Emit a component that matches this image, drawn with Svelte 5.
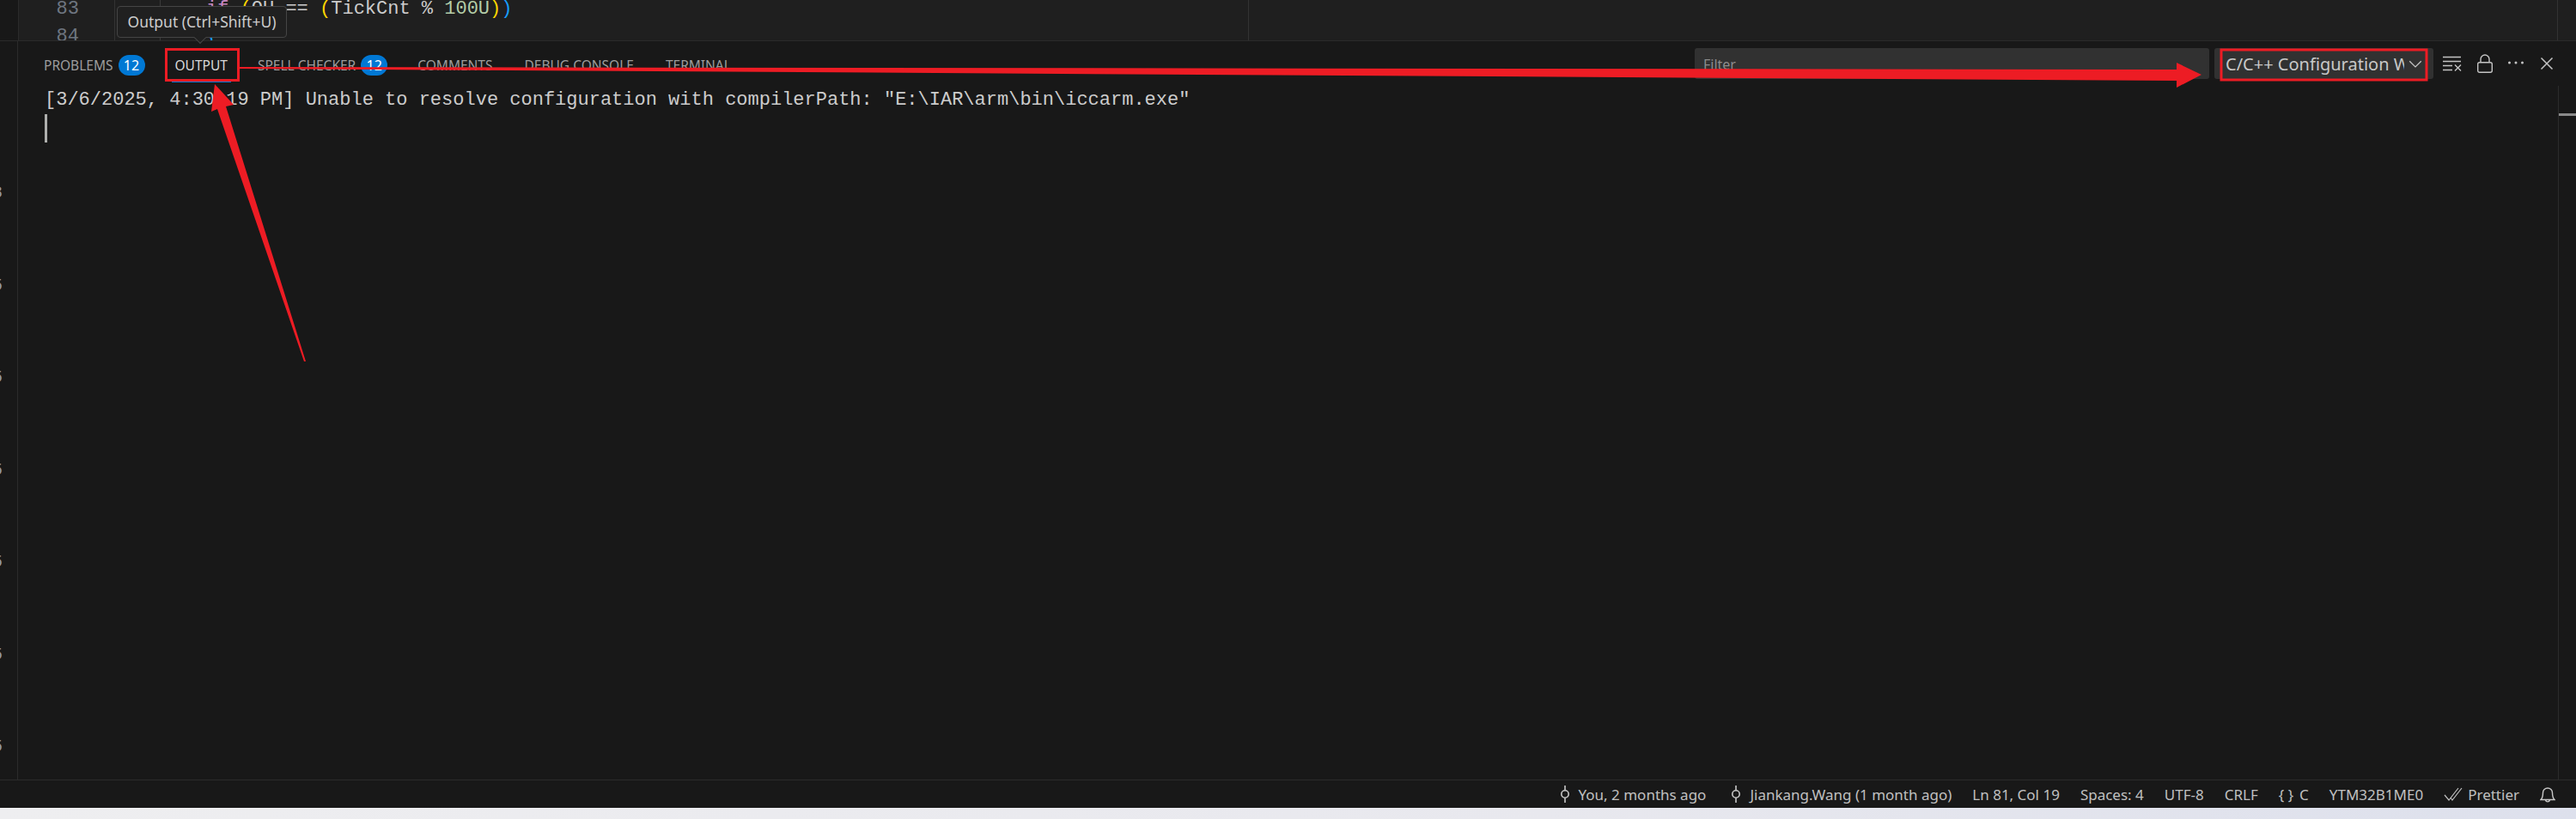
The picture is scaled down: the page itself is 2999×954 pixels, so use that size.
<script>
  // panel tabs, the badge is optional
  const tabs = [
    { label: 'PROBLEMS', badge: 12 },
    { label: 'OUTPUT', active: true },
    { label: 'SPELL CHECKER', badge: 12 },
    { label: 'COMMENTS' },
    { label: 'DEBUG CONSOLE' },
    { label: 'TERMINAL' }
  ];

  // clipped digits of the window behind, every 107px down the rail
  const railMarks = ['8', '5', '5', '5', '5', '5', '5'];

  const logLine =
    '[3/6/2025, 4:30:19 PM] Unable to resolve configuration with compilerPath: "E:\\IAR\\arm\\bin\\iccarm.exe"';
</script>

<div class="window">
  <section class="editor">
    <div class="rail"></div>
    <div class="gutter">
      <div class="num">83</div>
      <div class="num">84</div>
    </div>
    <div class="code">
      <div class="line"><span class="kw">if</span> <span class="br-y">(</span>OU == <span class="br-y">(</span>TickCnt % <span class="lit">100U</span><span class="br-y">)</span><span class="br-b">)</span></div>
      <div class="line"><span class="br-b">&#123;</span></div>
    </div>
    <div class="side"></div>
    <div class="edge"></div>
  </section>

  <section class="panel">
    <div class="rail marks">
      {#each railMarks as mark}
        <span class="mark">{mark}</span>
      {/each}
    </div>
    <div class="panel-main">
      <header class="panel-head">
        <nav class="tabs">
          {#each tabs as tab}
            <div class="tab" class:active={tab.active}>
              <span>{tab.label}</span>
              {#if tab.badge}<span class="badge">{tab.badge}</span>{/if}
            </div>
          {/each}
        </nav>
        <div class="filter">Filter</div>
        <div class="select">
          <span class="select-text">C/C++ Configuration Warnings</span>
          <svg width="18" height="18" viewBox="0 0 16 16" fill="none" stroke="#c8c8c8" stroke-width="1.1"><path d="M2 5.5l6 6 6-6" /></svg>
        </div>
        <div class="actions">
          <svg width="24" height="20" viewBox="0 0 24 20" fill="none" stroke="#c4c4c4" stroke-width="1.4"><path d="M1 2.5h21M1 7.5h21M1 12.5h11M1 17.5h11M15 11.5l7 7M22 11.5l-7 7" /></svg>
          <svg width="20" height="22" viewBox="0 0 20 22" fill="none" stroke="#c4c4c4" stroke-width="1.4"><rect x="1.7" y="9.7" width="16.6" height="11.6" rx="2" /><path d="M5 9.5V6a5 5 0 0 1 10 0v3.5" /></svg>
          <svg class="dots" width="20" height="6" viewBox="0 0 20 6" fill="#c4c4c4"><circle cx="2.5" cy="3" r="1.5" /><circle cx="10" cy="3" r="1.5" /><circle cx="17.5" cy="3" r="1.5" /></svg>
          <svg class="close" width="16" height="16" viewBox="0 0 16 16" fill="none" stroke="#c4c4c4" stroke-width="1.5"><path d="M1.5 1.5l13 13M14.5 1.5l-13 13" /></svg>
        </div>
      </header>
      <div class="panel-body">
        <div class="log">
          <div class="log-line">{logLine}</div>
          <span class="cursor"></span>
        </div>
        <div class="scroll-col"><div class="thumb"></div></div>
      </div>
    </div>
  </section>

  <footer class="status">
    <div class="status-item lead">
      <svg width="14" height="22" viewBox="0 0 14 22" fill="none" stroke="#c8c8c8" stroke-width="1.6"><circle cx="7" cy="11" r="4.2" /><path d="M7 1v5.8M7 15.2V21" /></svg>
      <span>You, 2 months ago</span>
    </div>
    <div class="status-item">
      <svg width="14" height="22" viewBox="0 0 14 22" fill="none" stroke="#c8c8c8" stroke-width="1.6"><circle cx="7" cy="11" r="4.2" /><path d="M7 1v5.8M7 15.2V21" /></svg>
      <span>Jiankang.Wang (1 month ago)</span>
    </div>
    <div class="status-item">Ln 81, Col 19</div>
    <div class="status-item">Spaces: 4</div>
    <div class="status-item">UTF-8</div>
    <div class="status-item">CRLF</div>
    <div class="status-item braces"><span>&#123;&nbsp;&#125;</span><span>C</span></div>
    <div class="status-item">YTM32B1ME0</div>
    <div class="status-item tight">
      <svg width="22" height="18" viewBox="0 0 22 18" fill="none" stroke="#c0c0c0" stroke-width="1.2"><path d="M1 10l5 6L17 2M8 13l2 3L21 2" /></svg>
      <span>Prettier</span>
    </div>
    <div class="status-item">
      <svg width="18" height="24" viewBox="0 0 18 24" fill="none" stroke="#c8c8c8" stroke-width="1.4"><path d="M1 18.5c2-2 2.5-4 2.5-8a5.5 5.5 0 0 1 11 0c0 4 .5 6 2.5 8zM6.5 19a2.6 2.6 0 0 0 5 0" /></svg>
    </div>
  </footer>
  <div class="desktop"></div>

  <div class="tooltip">Output (Ctrl+Shift+U)</div>

  <!-- red markup drawn on top of the screenshot -->
  <svg class="markup" width="2999" height="954" viewBox="0 0 2999 954">
    <rect x="193.5" y="57.5" width="84" height="36" fill="none" stroke="#ed1c24" stroke-width="3" />
    <rect x="2586" y="58" width="239" height="35" fill="none" stroke="#ed1c24" stroke-width="3" />
    <polygon fill="#ed1c24" points="279,78 2534,81 2534,73 2563,87 2534,102 2534,94 279,80" />
    <polygon fill="#ed1c24" points="250,98 272,122 263,124 356,421 354,421 253,127 246,130" />
  </svg>
</div>

<style>
  :global(body) {
    margin: 0;
    background: #181818;
  }

  .window {
    position: relative;
    width: 2999px;
    height: 954px;
    display: flex;
    flex-direction: column;
    overflow: hidden;
    font-family: "Noto Sans", "Open Sans", sans-serif;
    color: #ccc;
  }

  .editor {
    height: 47px;
    flex: none;
    display: flex;
    background: #1f1f1f;
    border-bottom: 1px solid #2b2b2b;
    overflow: hidden;
    font-family: "Liberation Mono", monospace;
    font-size: 22px;
    line-height: 32px;
  }

  .rail {
    width: 21px;
    flex: none;
    background: #181818;
    border-right: 1px solid #2b2b2b;
  }

  .gutter {
    width: 112px;
    flex: none;
    box-sizing: border-box;
    margin-top: -5px;
    padding-right: 41px;
    text-align: right;
    color: #6e7681;
    border-right: 1px solid #333;
  }

  .code {
    width: 1319px;
    flex: none;
    margin-top: -5px;
    padding-left: 106px;
    box-sizing: border-box;
    color: #ccc;
    background: linear-gradient(#3a3a3a, #3a3a3a) 52px 0 / 1px 100% no-repeat;
  }

  .line {
    white-space: pre;
  }

  .kw { color: #c586c0; }
  .lit { color: #b5cea8; }
  .br-y { color: #ffd700; }
  .br-b { color: #179fff; }

  .side {
    flex: 1;
    border-left: 1px solid #333;
  }

  .edge {
    width: 21px;
    flex: none;
    border-left: 1px solid #333;
  }

  .panel {
    flex: 1;
    min-height: 0;
    display: flex;
    background: #181818;
  }

  .marks {
    background: #181818;
    box-sizing: border-box;
    padding-top: 166px;
    overflow: hidden;
    display: flex;
    flex-direction: column;
    gap: 85.5px;
  }

  .mark {
    display: block;
    width: 3px;
    height: 22px;
    overflow: hidden;
    font-family: "Liberation Mono", monospace;
    font-size: 20px;
    line-height: 22px;
    color: #8f97a8;
    text-indent: -9px;
  }

  .panel-main {
    flex: 1;
    min-width: 0;
    display: flex;
    flex-direction: column;
  }

  .panel-head {
    height: 52px;
    flex: none;
    display: flex;
    align-items: flex-start;
    padding-top: 8px;
    box-sizing: border-box;
    font-size: 16px;
  }

  .tabs {
    display: flex;
    gap: 35px;
    padding-left: 30px;
    width: 1952px;
    box-sizing: border-box;
    flex: none;
  }

  .tab {
    display: flex;
    align-items: center;
    gap: 6px;
    height: 36px;
    color: #9d9d9d;
    font-size: 15.5px;
    position: relative;
    top: 2px;
  }

  .tab:nth-child(n + 5) {
    margin-left: 2px;
  }

  .tab.active {
    color: #d8d8d8;
  }

  .tab.active::after {
    content: "";
    position: absolute;
    left: -4px;
    right: -4px;
    bottom: -2px;
    height: 2px;
    background: #0078d4;
  }

  .badge {
    width: 31px;
    height: 24px;
    border-radius: 12px;
    background: #0078d4;
    color: #fff;
    font-size: 16px;
    line-height: 24px;
    text-align: center;
  }

  .filter {
    width: 599px;
    height: 36px;
    flex: none;
    box-sizing: border-box;
    padding-left: 10px;
    background: #313131;
    border-radius: 3px;
    color: #8c8c8c;
    font-size: 16px;
    line-height: 38px;
  }

  .select {
    width: 255px;
    height: 36px;
    flex: none;
    margin-left: 6px;
    display: flex;
    align-items: center;
    box-sizing: border-box;
    padding-left: 13px;
    background: #313131;
    border-radius: 3px;
    color: #c8c8c8;
    font-size: 20px;
  }

  .select-text {
    width: 208px;
    flex: none;
    overflow: hidden;
    white-space: nowrap;
  }

  .select svg {
    margin-left: 4px;
  }

  .actions {
    display: flex;
    align-items: center;
    height: 36px;
    padding-left: 10px;
    gap: 16px;
  }

  .dots {
    margin-top: -2px;
  }

  .close {
    margin-left: 2px;
  }

  .panel-body {
    flex: 1;
    min-height: 0;
    display: flex;
  }

  .log {
    flex: 1;
    padding-left: 31px;
    padding-top: 1px;
    font-family: "Liberation Mono", monospace;
    font-size: 22px;
    line-height: 32px;
    color: #cccccc;
  }

  .log-line {
    height: 32px;
    white-space: pre;
  }

  .cursor {
    display: block;
    width: 3px;
    height: 33px;
    background: #aeafad;
  }

  .scroll-col {
    width: 20px;
    flex: none;
    border-left: 1px solid #2b2b2b;
  }

  .thumb {
    height: 3px;
    margin-top: 32px;
    background: #8a8a8a;
  }

  .status {
    height: 33px;
    flex: none;
    display: flex;
    justify-content: flex-end;
    align-items: center;
    gap: 24px;
    box-sizing: border-box;
    padding-right: 24px;
    background: #181818;
    border-top: 1px solid #2b2b2b;
    font-size: 17px;
    color: #c0c0c0;
  }

  .status-item {
    display: flex;
    align-items: center;
    gap: 9px;
    white-space: nowrap;
  }

  .status-item.tight {
    gap: 6px;
  }

  .status-item.braces {
    gap: 7px;
  }

  .lead {
    margin-right: 4px;
  }

  .desktop {
    height: 13px;
    flex: none;
    background: linear-gradient(90deg, #eeeef0, #e8e8ee 60%, #dde0ec);
  }

  .tooltip {
    position: absolute;
    left: 136px;
    top: 7px;
    width: 198px;
    height: 37px;
    box-sizing: border-box;
    background: #202020;
    border: 1px solid #454545;
    border-radius: 4px;
    font-size: 17.5px;
    line-height: 35px;
    text-align: center;
    color: #ccc;
  }

  .tooltip::after {
    content: "";
    position: absolute;
    left: 91px;
    bottom: -6px;
    width: 9px;
    height: 9px;
    background: #202020;
    border-right: 1px solid #454545;
    border-bottom: 1px solid #454545;
    transform: rotate(45deg);
  }

  .markup {
    position: absolute;
    left: 0;
    top: 0;
    pointer-events: none;
  }
</style>
